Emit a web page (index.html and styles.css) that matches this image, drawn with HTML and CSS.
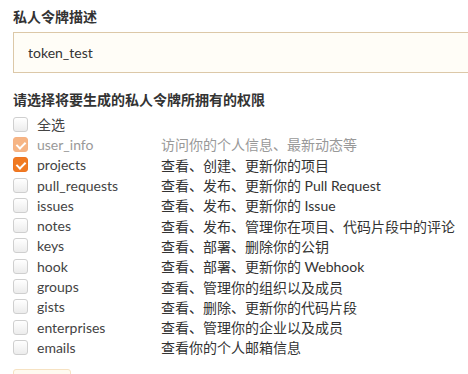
FILE: index.html
```html
<!DOCTYPE html>
<html lang="zh-CN">
<head>
    <meta charset="UTF-8">
    <title>私人令牌</title>
    <link rel="stylesheet" href="styles.css">
</head>
<body>
    <form class="token-form">
        <div class="field">
            <label class="field-label">私人令牌描述</label>
            <input class="text-input" type="text" value="token_test">
        </div>

        <div class="field">
            <label class="field-label">请选择将要生成的私人令牌所拥有的权限</label>
            <ul class="scopes">
                <li class="scope">
                    <span class="check"></span>
                    <span class="scope-name">全选</span>
                </li>
                <li class="scope disabled">
                    <span class="check checked"></span>
                    <span class="scope-name">user_info</span>
                    <span class="scope-desc">访问你的个人信息、最新动态等</span>
                </li>
                <li class="scope">
                    <span class="check checked"></span>
                    <span class="scope-name">projects</span>
                    <span class="scope-desc">查看、创建、更新你的项目</span>
                </li>
                <li class="scope">
                    <span class="check"></span>
                    <span class="scope-name">pull_requests</span>
                    <span class="scope-desc">查看、发布、更新你的 Pull Request</span>
                </li>
                <li class="scope">
                    <span class="check"></span>
                    <span class="scope-name">issues</span>
                    <span class="scope-desc">查看、发布、更新你的 Issue</span>
                </li>
                <li class="scope">
                    <span class="check"></span>
                    <span class="scope-name">notes</span>
                    <span class="scope-desc">查看、发布、管理你在项目、代码片段中的评论</span>
                </li>
                <li class="scope">
                    <span class="check"></span>
                    <span class="scope-name">keys</span>
                    <span class="scope-desc">查看、部署、删除你的公钥</span>
                </li>
                <li class="scope">
                    <span class="check"></span>
                    <span class="scope-name">hook</span>
                    <span class="scope-desc">查看、部署、更新你的 Webhook</span>
                </li>
                <li class="scope">
                    <span class="check"></span>
                    <span class="scope-name">groups</span>
                    <span class="scope-desc">查看、管理你的组织以及成员</span>
                </li>
                <li class="scope">
                    <span class="check"></span>
                    <span class="scope-name">gists</span>
                    <span class="scope-desc">查看、删除、更新你的代码片段</span>
                </li>
                <li class="scope">
                    <span class="check"></span>
                    <span class="scope-name">enterprises</span>
                    <span class="scope-desc">查看、管理你的企业以及成员</span>
                </li>
                <li class="scope">
                    <span class="check"></span>
                    <span class="scope-name">emails</span>
                    <span class="scope-desc">查看你的个人邮箱信息</span>
                </li>
            </ul>
        </div>

        <button class="submit" type="button">提交</button>
    </form>
</body>
</html>
```

FILE: styles.css
```css
* {
    margin: 0;
    padding: 0;
    box-sizing: border-box;
}

body {
    font-family: Lato, "Noto Sans CJK SC", sans-serif;
    font-size: 14px;
    color: #333;
    background: #fff;
    overflow: hidden;
}

.token-form {
    padding: 8px 0 0 13px;
}

.field-label {
    display: block;
    font-weight: bold;
    line-height: 18px;
    color: #333;
}

.text-input {
    display: block;
    width: 480px;
    height: 41px;
    margin-top: 6px;
    margin-bottom: 18px;
    padding: 0 14px;
    border: 1px solid #dcc8a8;
    background: #fffdf7;
    font-family: inherit;
    font-size: 14px;
    color: #333;
    outline: none;
}

.scopes {
    list-style: none;
    margin-top: 5px;
}

.scope {
    display: flex;
    align-items: center;
    height: 20.3px;
}

.check {
    position: relative;
    flex: none;
    width: 15px;
    height: 15px;
    border: 1px solid #cfcfcf;
    border-radius: 3px;
    background: linear-gradient(#fff, #ececec);
}

.check.checked {
    border-color: #ee7420;
    background: #f07a22;
}

.check.checked::after {
    content: "";
    position: absolute;
    left: 4px;
    top: 2px;
    width: 4px;
    height: 7px;
    border: solid #fff;
    border-width: 0 2px 2px 0;
    transform: rotate(45deg);
}

.scope.disabled .check.checked {
    opacity: 0.55;
}

.scope-name {
    flex: none;
    width: 133px;
    padding-left: 9px;
    color: #444;
}

.scope.disabled .scope-name,
.scope.disabled .scope-desc {
    color: #999;
}

.scope-desc {
    color: #333;
    white-space: nowrap;
}

/* only the top edge of the submit button shows in the frame */
.submit {
    display: block;
    width: 58px;
    height: 36px;
    margin-top: 11px;
    border: 1px solid #f6e2c2;
    border-radius: 3px;
    background: #fffaf0;
    color: #e07a20;
    font-family: inherit;
}
```
